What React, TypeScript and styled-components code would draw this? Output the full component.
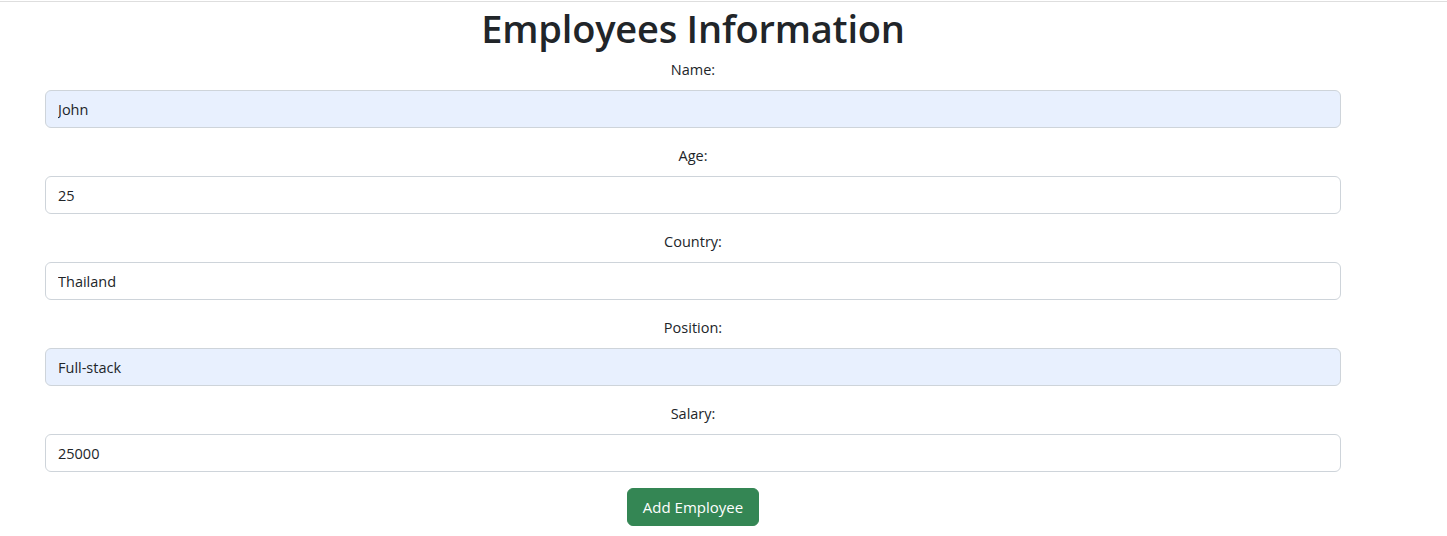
import React from 'react';
import styled, { createGlobalStyle } from 'styled-components';

const GlobalStyle = createGlobalStyle`
  body {
    margin: 0;
    background: #fff;
    color: #212529;
    font-family: "Open Sans", "Noto Sans", sans-serif;
    font-size: 16px;
    line-height: 1.5;
  }
  * { box-sizing: border-box; }
`

const TopRule = styled.div`
  margin-top: 1px;
  height: 1px;
  background: #dedede;
`

const Container = styled.div`
  width: 1296px;
  margin-left: 45px;
  text-align: center;
`

const Title = styled.h1`
  margin: 0 0 8px;
  padding-top: 2px;
  height: 48px;
  font-size: 38px;
  font-weight: 600;
  line-height: 48px;
  letter-spacing: -0.2px;
  color: #212529;
`

const Field = styled.div`
  margin-bottom: 16px;
`

const Label = styled.label`
  display: block;
  margin-bottom: 8px;
  font-size: 14.5px;
  line-height: 24px;
`

const Input = styled.input<{ $filled?: boolean }>`
  display: block;
  width: 100%;
  height: 38px;
  padding: 6px 12px;
  font-family: inherit;
  font-size: 14.5px;
  color: #212529;
  background: ${p => (p.$filled ? '#e8f0fe' : '#fff')};
  border: 1px solid #ced4da;
  border-radius: 6px;
  outline: none;
`

const Button = styled.button`
  height: 38px;
  padding: 0 15px;
  font-family: inherit;
  font-size: 15px;
  color: #fff;
  background: #348654;
  border: 1px solid #348654;
  border-radius: 6px;
`

const fields = [
  { label: 'Name:', value: 'John', filled: true },
  { label: 'Age:', value: '25' },
  { label: 'Country:', value: 'Thailand' },
  { label: 'Position:', value: 'Full-stack', filled: true },
  { label: 'Salary:', value: '25000' },
];

export default function App() {
  return (
    <>
      <GlobalStyle />
      <TopRule />
      <Container>
        <Title>Employees Information</Title>
        {fields.map(f => (
          <Field key={f.label}>
            <Label>{f.label}</Label>
            <Input type="text" defaultValue={f.value} $filled={f.filled} />
          </Field>
        ))}
        <Button>Add Employee</Button>
      </Container>
    </>
  );
}
